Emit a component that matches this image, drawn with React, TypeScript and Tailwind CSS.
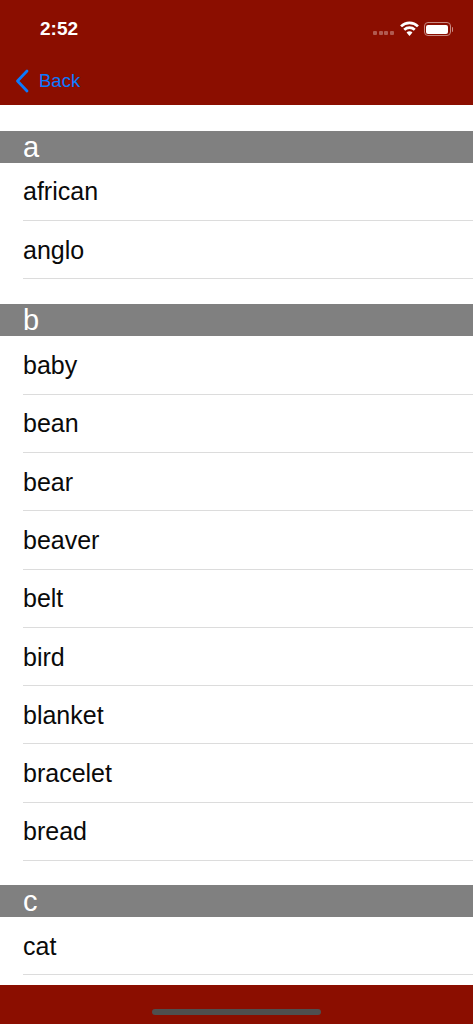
const sections = [
  { letter: 'a', gap: 'pt-[25.6px]', items: ['african', 'anglo'] },
  { letter: 'b', gap: 'pt-[25.2px]', items: ['baby', 'bean', 'bear', 'beaver', 'belt', 'bird', 'blanket', 'bracelet', 'bread'] },
  { letter: 'c', gap: 'pt-[24.1px]', items: ['cat'] },
]

const App = () => {
  return (
    <div className="flex flex-col h-[1024px] w-[473px] overflow-hidden bg-white font-['Liberation_Sans',sans-serif]">
      {/* Header */}
      <div className="flex flex-col shrink-0 h-[105px] bg-[#8b0e00] px-4">
        <div className="flex items-center justify-between h-[58px] pl-6 pr-1">
          <span className="text-[19px] font-bold text-white">2:52</span>
          <div className="flex items-center">
            <div className="flex gap-[1.5px] mt-[7px] mr-[6px]">
              <span className="w-[4px] h-[4px] rounded-[1px] bg-[#b05a50]" />
              <span className="w-[4px] h-[4px] rounded-[1px] bg-[#b05a50]" />
              <span className="w-[4px] h-[4px] rounded-[1px] bg-[#b05a50]" />
              <span className="w-[4px] h-[4px] rounded-[1px] bg-[#b05a50]" />
            </div>
            <svg width="19" height="15" viewBox="0 0 18 14" className="mr-[5px] mb-[1px]">
              <path d="M1 5 A11.5 11.5 0 0 1 17 5" fill="none" stroke="white" strokeWidth="2.6" />
              <path d="M4 8.2 A7.3 7.3 0 0 1 14 8.2" fill="none" stroke="white" strokeWidth="2.6" />
              <path d="M6.2 10.8 A3.8 3.8 0 0 1 11.8 10.8 L9 14 Z" fill="white" />
            </svg>
            <div className="flex items-center">
              <div className="w-[27px] h-[14px] rounded-[4px] border border-[#c98a82] p-[1.5px]">
                <div className="w-full h-full rounded-[2px] bg-white" />
              </div>
              <span className="w-[1.5px] h-[5px] ml-[1px] rounded-r-sm bg-[#c98a82]" />
            </div>
          </div>
        </div>
        <div className="flex items-center h-[46px]">
          <svg width="14" height="24" viewBox="0 0 14 24" className="mr-[10px] -ml-[1px]">
            <path d="M12 2 L2.5 12 L12 22" fill="none" stroke="#0a7aff" strokeWidth="2.8" strokeLinecap="round" strokeLinejoin="round" />
          </svg>
          <span className="text-[18.5px] text-[#0a7aff]">Back</span>
        </div>
      </div>

      {/* List */}
      <div className="flex-1 overflow-hidden">
        {sections.map((section) => (
          <div key={section.letter} className={section.gap}>
            <div className="flex items-center h-[32px] pl-[23px] bg-[#808080] text-[29px] leading-[32px] text-white">
              {section.letter}
            </div>
            {section.items.map((item) => (
              <div key={item} className="pl-[23px]">
                <div className="flex items-center h-[58.3px] pt-[1.5px] border-b border-[#dcdcdc] text-[25px] text-[#0a0a0a]">
                  {item}
                </div>
              </div>
            ))}
          </div>
        ))}
      </div>

      {/* Footer */}
      <div className="flex justify-center shrink-0 h-[39px] bg-[#8b0e00] pt-[24px]">
        <div className="w-[169px] h-[6px] rounded-full bg-[#4f4f4f]" />
      </div>
    </div>
  )
}

export default App
